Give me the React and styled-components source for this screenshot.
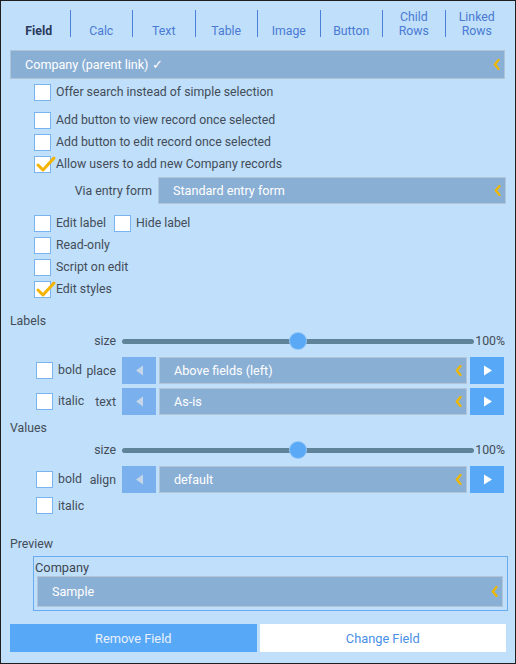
import React from "react";
import styled, { createGlobalStyle } from "styled-components";

const Global = createGlobalStyle`
  html, body { margin: 0; padding: 0; }
  body { font-family: Roboto, "Liberation Sans", Arial, sans-serif; }
  * { box-sizing: border-box; }
`;

const Frame = styled.div`
  width: 516px;
  height: 664px;
  border: 1px solid #1e1e1e;
  background: #bfdffb;
  color: #434c57;
  font-size: 12.3px;
  overflow: hidden;
`;

const TabBar = styled.div`
  margin: 9px 7px 0 7px;
  display: grid;
  grid-template-columns: repeat(8, 1fr);
`;

const Tab = styled.div`
  height: 27px;
  display: flex;
  align-items: flex-end;
  justify-content: center;
  text-align: center;
  line-height: 14px;
  font-size: 12.3px;
  color: ${(p) => (p.$active ? "#2b3a5e" : "#4a7ad2")};
  font-weight: ${(p) => (p.$active ? 700 : 400)};
  border-right: ${(p) => (p.$last ? "none" : "1px solid #4a80d8")};
`;

const TabText = styled.span`
  transform: translateY(1px);
`;

const FieldBar = styled.div`
  margin: 13px 10px 0 9px;
  height: 29px;
  border: 1px solid #aec3d6;
  background: #8aafd5;
  color: #fff;
  font-size: 12.6px;
  display: flex;
  align-items: center;
  padding: 0 4px 0 14px;
`;

const Grow = styled.span`
  flex: 1;
  white-space: nowrap;
  overflow: hidden;
`;

const OptionList = styled.div`
  padding: 2px 9px 0 33px;
`;

const CheckRow = styled.div`
  height: 22px;
  display: flex;
  align-items: center;
  margin-bottom: ${(p) => (p.$spaced ? "6px" : "0")};
  margin-top: ${(p) => p.$top || 0}px;
`;

const BoxWrap = styled.span`
  position: relative;
  width: 17px;
  height: 17px;
  flex: none;
  background: #fff;
  border: 1px solid #7ab4f0;
  margin-right: 5px;
  margin-left: ${(p) => p.$ml || 0}px;
`;

const Tick = styled.svg`
  position: absolute;
  left: 1px;
  top: 0px;
  overflow: visible;
`;

const Text = styled.span`
  white-space: nowrap;
`;

const Checkbox = ({ checked, ml }) => (
  <BoxWrap $ml={ml}>
    {checked && (
      <Tick width="18" height="16" viewBox="0 0 18 16">
        <path d="M2 8 L7 13 L18 1" fill="none" stroke="#f3b300" strokeWidth="3" strokeLinecap="round" strokeLinejoin="round" />
      </Tick>
    )}
  </BoxWrap>
);

const ViaRow = styled.div`
  margin-top: 2px;
  display: grid;
  grid-template-columns: 118px 1fr;
  column-gap: 6px;
  align-items: center;
`;

const RowLabel = styled.span`
  text-align: right;
  white-space: nowrap;
`;

const SelectBox = styled.div`
  flex: 1;
  height: ${(p) => p.$h || 27}px;
  border: 1px solid #b2c5d8;
  background: #8aafd5;
  color: #fff;
  font-size: 12.6px;
  display: flex;
  align-items: center;
  padding: 0 4px 0 ${(p) => p.$pl || 14}px;
  min-width: 0;
  margin-left: ${(p) => p.$ml || 0}px;
`;

const ChevronSvg = styled.svg`
  flex: none;
`;

const Chevron = () => (
  <ChevronSvg width="7" height="11" viewBox="0 0 7 11">
    <polyline points="5.5,1 1.8,5.5 5.5,10" fill="none" stroke="#efb800" strokeWidth="2.3" strokeLinecap="round" strokeLinejoin="round" />
  </ChevronSvg>
);

const Select = ({ children, h, pl, ml }) => (
  <SelectBox $h={h} $pl={pl} $ml={ml}>
    <Grow>{children}</Grow>
    <Chevron />
  </SelectBox>
);

const SectionTitle = styled.div`
  margin-top: ${(p) => p.$top}px;
  padding-left: 9px;
  height: 16px;
  line-height: 16px;
`;

const StyleRow = styled.div`
  margin-top: ${(p) => p.$top}px;
  height: ${(p) => p.$h}px;
  padding: 0 11px 0 35px;
  display: grid;
  grid-template-columns: 48px 32px 1fr;
  align-items: center;
`;

const Toggle = styled.span`
  display: flex;
  align-items: center;
  margin-top: ${(p) => p.$shift || 0}px;
`;

const Control = styled.div`
  margin-left: 6px;
  display: flex;
  align-items: center;
  gap: 3px;
  height: 100%;
  min-width: 0;
`;

const Track = styled.div`
  position: relative;
  flex: 1;
  height: 5px;
  border-radius: 3px;
  background: #5f8399;
`;

const Thumb = styled.div`
  position: absolute;
  top: 50%;
  width: 16px;
  height: 16px;
  margin: -8px 0 0 -8px;
  border-radius: 50%;
  background: #5aa9f7;
  box-shadow: 0 0 0 1px #8ec4f6;
`;

const Value = styled.span`
  margin-left: -2px;
  margin-right: -1px;
`;

const ArrowBtn = styled.div`
  flex: none;
  width: 34px;
  height: 27px;
  display: flex;
  align-items: center;
  justify-content: center;
  background: ${(p) => (p.$dir === "left" ? "#7ab0ee" : "#58a8f8")};
`;

const Arrow = ({ dir }) => (
  <ArrowBtn $dir={dir}>
    <svg width="9" height="11" viewBox="0 0 9 11">
      {dir === "left" ? (
        <polygon points="8,0.5 8,10.5 1,5.5" fill="#c4d6e8" />
      ) : (
        <polygon points="1,0.5 1,10.5 9,5.5" fill="#ffffff" />
      )}
    </svg>
  </ArrowBtn>
);

const Slider = ({ pct }) => (
  <Track>
    <Thumb style={{ left: `${pct}%` }} />
  </Track>
);

const PreviewBox = styled.div`
  margin: 4px 7px 0 32px;
  border: 1px solid #6aaaf0;
  padding: 2px 4px 3px 1px;
`;

const PreviewLabel = styled.div`
  font-size: 12.8px;
  line-height: 17px;
  color: #3d4650;
`;

const ActionBar = styled.div`
  margin: 13px 9px 0 9px;
  display: grid;
  grid-template-columns: 1fr 1fr;
  gap: 3px;
`;

const ActionButton = styled.div`
  height: 28px;
  display: flex;
  align-items: center;
  justify-content: center;
  font-size: 12.8px;
  background: ${(p) => (p.$primary ? "#58a8f8" : "#ffffff")};
  color: ${(p) => (p.$primary ? "#e8f1fb" : "#4a90e6")};
`;

const tabs = ["Field", "Calc", "Text", "Table", "Image", "Button", "Child Rows", "Linked Rows"];

export default function App() {
  return (
    <>
      <Global />
      <Frame>
        <TabBar>
          {tabs.map((t, i) => (
            <Tab key={t} $active={i === 0} $last={i === tabs.length - 1}>
              <TabText>
                {t.includes(" ") ? (
                  <>
                    {t.split(" ")[0]}
                    <br />
                    {t.split(" ")[1]}
                  </>
                ) : (
                  t
                )}
              </TabText>
            </Tab>
          ))}
        </TabBar>

        <FieldBar>
          <Grow>Company (parent link) ✓</Grow>
          <Chevron />
        </FieldBar>

        <OptionList>
          <CheckRow $spaced>
            <Checkbox />
            <Text>Offer search instead of simple selection</Text>
          </CheckRow>
          <CheckRow>
            <Checkbox />
            <Text>Add button to view record once selected</Text>
          </CheckRow>
          <CheckRow>
            <Checkbox />
            <Text>Add button to edit record once selected</Text>
          </CheckRow>
          <CheckRow>
            <Checkbox checked />
            <Text>Allow users to add new Company records</Text>
          </CheckRow>
          <ViaRow>
            <RowLabel>Via entry form</RowLabel>
            <Select>Standard entry form</Select>
          </ViaRow>
          <CheckRow $top={8}>
            <Checkbox />
            <Text>Edit label</Text>
            <Checkbox ml={8} />
            <Text>Hide label</Text>
          </CheckRow>
          <CheckRow>
            <Checkbox />
            <Text>Read-only</Text>
          </CheckRow>
          <CheckRow>
            <Checkbox />
            <Text>Script on edit</Text>
          </CheckRow>
          <CheckRow>
            <Checkbox checked />
            <Text>Edit styles</Text>
          </CheckRow>
        </OptionList>

        <SectionTitle $top={13}>Labels</SectionTitle>
        <StyleRow $top={2} $h={20}>
          <span />
          <RowLabel>size</RowLabel>
          <Control>
            <Slider pct={50} />
            <Value>100%</Value>
          </Control>
        </StyleRow>
        <StyleRow $top={6} $h={27}>
          <Toggle $shift={-1}>
            <Checkbox />
            <Text>bold</Text>
          </Toggle>
          <RowLabel>place</RowLabel>
          <Control>
            <Arrow dir="left" />
            <Select>Above fields (left)</Select>
            <Arrow dir="right" />
          </Control>
        </StyleRow>
        <StyleRow $top={4} $h={27}>
          <Toggle $shift={-1}>
            <Checkbox />
            <Text>italic</Text>
          </Toggle>
          <RowLabel>text</RowLabel>
          <Control>
            <Arrow dir="left" />
            <Select>As-is</Select>
            <Arrow dir="right" />
          </Control>
        </StyleRow>

        <SectionTitle $top={5}>Values</SectionTitle>
        <StyleRow $top={4} $h={20}>
          <span />
          <RowLabel>size</RowLabel>
          <Control>
            <Slider pct={50} />
            <Value>100%</Value>
          </Control>
        </StyleRow>
        <StyleRow $top={6} $h={27}>
          <Toggle $shift={-1}>
            <Checkbox />
            <Text>bold</Text>
          </Toggle>
          <RowLabel>align</RowLabel>
          <Control>
            <Arrow dir="left" />
            <Select>default</Select>
            <Arrow dir="right" />
          </Control>
        </StyleRow>
        <StyleRow $top={4} $h={17}>
          <Toggle>
            <Checkbox />
            <Text>italic</Text>
          </Toggle>
        </StyleRow>

        <SectionTitle $top={22}>Preview</SectionTitle>
        <PreviewBox>
          <PreviewLabel>Company</PreviewLabel>
          <Select h={31} ml={2}>Sample</Select>
        </PreviewBox>

        <ActionBar>
          <ActionButton $primary>Remove Field</ActionButton>
          <ActionButton>Change Field</ActionButton>
        </ActionBar>
      </Frame>
    </>
  );
}
